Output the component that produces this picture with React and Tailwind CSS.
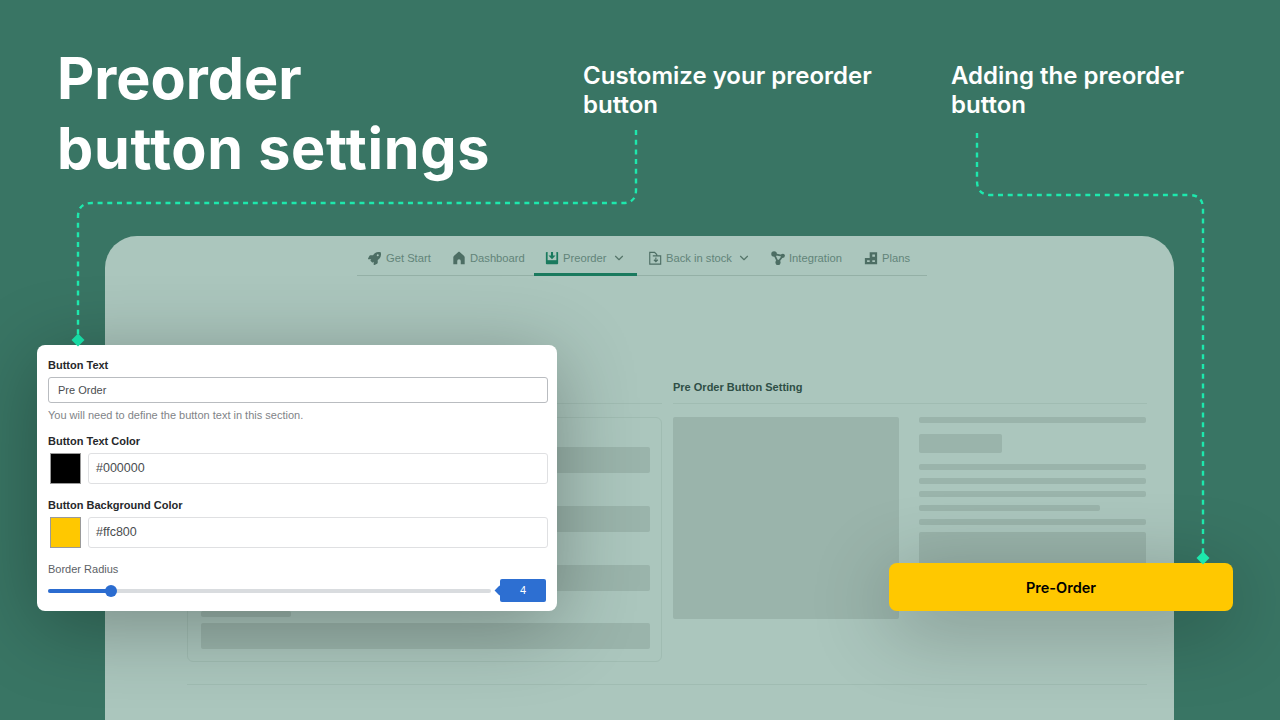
import { FaRocket } from 'react-icons/fa'
import { ChevronDown } from 'lucide-react'

const Icon = ({ children }) => (
  <svg viewBox="0 0 16 16" className="w-[14px] h-[14px]" fill="currentColor">{children}</svg>
)

const TABS = [
  { label: 'Get Start', width: 'w-[84px]', icon: <FaRocket className="w-[13px] h-[13px]" /> },
  {
    label: 'Dashboard',
    width: 'w-[93px]',
    icon: (
      <Icon>
        <path d="M8 .8c.4 0 .8.2 1.100.5l4.500 4.200c.5.400.9 1 .9 1.700V15H10v-3.500a2 2 0 0 0-4 0V15H1.500V7.200c0-.7.400-1.300.9-1.700l4.500-4.200C7.200 1 7.600.8 8 .8z" />
      </Icon>
    ),
  },
  {
    label: 'Preorder',
    width: 'w-[103px]',
    active: true,
    caret: true,
    icon: (
      <Icon>
        <rect x="1" y="1" width="14" height="14" rx="1" fill="#1a7a5e" />
        <rect x="3" y="1" width="10" height="9.500" fill="#abc6bd" />
        <path d="M6.800 1h2.400v4.200H12L8 9.500 4 5.200h2.800z" fill="#1a7a5e" />
      </Icon>
    ),
  },
  {
    label: 'Back in stock',
    width: 'w-[123px]',
    caret: true,
    icon: (
      <Icon>
        <path d="M2 11V1.500h5.500L10 4v1.500M5.500 5.500H14.500V15H2v-4" fill="none" stroke="currentColor" strokeWidth="1.300" />
        <path d="M9 7.500V12M6.800 10 9 12.200 11.200 10" fill="none" stroke="currentColor" strokeWidth="1.300" />
      </Icon>
    ),
  },
  {
    label: 'Integration',
    width: 'w-[93px]',
    icon: (
      <Icon>
        <circle cx="3.500" cy="3.500" r="3.200" />
        <circle cx="13.500" cy="5.500" r="2.400" />
        <circle cx="8" cy="13" r="2.900" />
        <path d="M3.500 3.500 13.500 5.500 8 13z" fill="none" stroke="currentColor" strokeWidth="2" />
      </Icon>
    ),
  },
  {
    label: 'Plans',
    width: 'w-[74px]',
    icon: (
      <Icon>
        <path
          d="M6.500 1.500h8.500V15H1V8h5.500zM9.500 4v2.500h3V4zM3.500 10.500v2h3v-2zm6 0v2h3v-2z"
          fillRule="evenodd"
        />
      </Icon>
    ),
  },
]

const Bar = ({ className }) => <div className={`bg-[#9ab4ab] rounded-[2px] ${className}`} />

function SkeletonPanel() {
  return (
    <div className="w-[1069px] h-[520px] ml-[105px] mt-[236px] bg-[#abc6bd] rounded-[32px] pl-[82px] pr-[27px] overflow-hidden">
      <div className="flex items-end h-[40px] w-[570px] ml-[170px] border-b border-[#94b0a6] text-[#628479]">
        {TABS.map((tab) => (
          <div
            key={tab.label}
            className={`flex items-center ${tab.width} h-[35px] pt-[2px] pl-[11px] shrink-0 border-b-[3px] -mb-px ${tab.active ? 'border-[#1a7a5e]' : 'border-transparent'}`}
          >
            <span className="w-[18px] flex text-[#4d6e64]">{tab.icon}</span>
            <span className="text-[11.200px]">{tab.label}</span>
            {tab.caret && <ChevronDown className="w-[14px] h-[14px] ml-[5px] text-[#557569]" />}
          </div>
        ))}
      </div>

      <div className="flex gap-[11px] mt-[100px]">
        <div className="w-[475px] h-[28px] border-b border-[#a0bcb2]" />
        <div className="w-[474px] h-[28px] pt-[3px] border-b border-[#a0bcb2] text-[11px] font-bold text-[#2f4f46]">
          Pre Order Button Setting
        </div>
      </div>

      <div className="flex gap-[11px] mt-[13px]">
        <div className="w-[475px] h-[245px] border border-[#a0bcb2] rounded-[6px] pt-[29px] pl-[13px] pr-[11px]">
          <Bar className="h-[26px]" />
          <Bar className="h-[26px] mt-[33px]" />
          <Bar className="h-[26px] mt-[33px]" />
          <Bar className="h-[6px] w-[90px] mt-[20px]" />
          <Bar className="h-[26px] mt-[6px]" />
        </div>
        <div className="flex gap-[20px] w-[474px]">
          <Bar className="w-[226px] h-[202px]" />
          <div className="w-[227px]">
            <Bar className="h-[6px]" />
            <Bar className="h-[19px] w-[83px] mt-[11px]" />
            <Bar className="h-[6px] mt-[11px]" />
            <Bar className="h-[6px] mt-[8px]" />
            <Bar className="h-[6px] mt-[7px]" />
            <Bar className="h-[6px] w-[181px] mt-[8px]" />
            <Bar className="h-[6px] mt-[8px]" />
            <Bar className="h-[60px] mt-[7px]" />
          </div>
        </div>
      </div>

      <div className="h-px bg-[#a0bcb2] mt-[22px] w-[960px]" />
    </div>
  )
}

function ColorField({ label, value, swatch, className }) {
  return (
    <div className={className}>
      <div className="text-[11px] leading-[14px] font-bold text-[#26282b]">{label}</div>
      <div className="flex items-center mt-[5px] pl-[2px] gap-[7px]">
        <div className={`w-[31px] h-[31px] border border-[#9a9a9a] ${swatch}`} />
        <div className="flex-1 h-[31px] border-[1.500px] border-[#dfe0e2] rounded-[3px] flex items-center pl-[7px] text-[12.500px] text-[#4a4d50]">
          {value}
        </div>
      </div>
    </div>
  )
}

function SettingsCard() {
  return (
    <div className="absolute left-[37px] top-[345px] w-[520px] h-[266px] bg-white rounded-[8px] pl-[11px] pr-[9px] pt-[13px] shadow-[0_14px_80px_rgba(0,0,0,0.3)] font-['Liberation_Sans',sans-serif]">
      <div className="text-[11px] leading-[14px] font-bold text-[#26282b]">Button Text</div>
      <div className="mt-[5px] h-[26px] border-[1.500px] border-[#b9bcc0] rounded-[3px] flex items-center pl-[9px] text-[11px] text-[#4a4d50]">
        Pre Order
      </div>
      <div className="mt-[5px] text-[11px] leading-[14px] text-[#7f8488]">You will need to define the button text in this section.</div>
      <ColorField label="Button Text Color" value="#000000" swatch="bg-black" className="mt-[12px]" />
      <ColorField label="Button Background Color" value="#ffc800" swatch="bg-[#ffc800]" className="mt-[14px]" />
      <div className="mt-[14px] text-[11px] leading-[14px] text-[#5c6166]">Border Radius</div>
      <div className="flex items-center mt-[3px] h-[23px]">
        <div className="relative w-[443px] h-[4px] rounded-full bg-[#d9dcdf]">
          <div className="w-[63px] h-full rounded-full bg-[#2b6cd0]" />
          <div className="absolute left-[57px] top-[-4px] w-[12px] h-[12px] rounded-full bg-[#2b6cd0]" />
        </div>
        <div className="relative ml-[9px] w-[46px] h-[23px] bg-[#2d6fd2] rounded-[2px] flex items-center justify-center text-[11px] text-white">
          <div className="absolute left-[-4px] top-[8px] w-[7px] h-[7px] rotate-45 bg-[#2d6fd2]" />
          4
        </div>
      </div>
    </div>
  )
}

export default function App() {
  return (
    <div className="relative w-[1280px] h-[720px] overflow-hidden bg-[#397564] font-['Liberation_Sans',sans-serif]">
      <SkeletonPanel />

      {/* headings */}
      <h1 className="absolute left-[57px] top-[43px] font-['Inter',sans-serif] font-bold text-[57.500px] leading-[70px] text-white [font-variant-ligatures:none]">
        Preorder
        <br />
        <span className="tracking-[0.700px]">button settings</span>
      </h1>
      <p className="absolute left-[583px] top-[61px] font-['Inter',sans-serif] font-semibold text-[24px] leading-[29px] text-white">
        Customize your preorder
        <br />
        button
      </p>
      <p className="absolute left-[951px] top-[61px] font-['Inter',sans-serif] font-semibold text-[24px] leading-[29px] text-white">
        Adding the preorder
        <br />
        button
      </p>

      <SettingsCard />

      <div className="absolute left-[889px] top-[563px] w-[344px] h-[48px] pt-px rounded-[8px] bg-[#ffc800] flex items-center justify-center font-['Inter',sans-serif] font-semibold text-[14.500px] text-black shadow-[0_14px_80px_rgba(0,0,0,0.3)]">
        Pre-Order
      </div>

      {/* connector lines */}
      <svg className="absolute inset-0 pointer-events-none" width="1280" height="720" fill="none">
        <path
          d="M636 130V190Q636 203 623 203H92Q78 203 78 217V335"
          stroke="#1de9ad"
          strokeWidth="2.400"
          strokeDasharray="5 4.700"
        />
        <path
          d="M977 133V181Q977 195 991 195H1189Q1203 195 1203 209V553"
          stroke="#1de9ad"
          strokeWidth="2.400"
          strokeDasharray="5 4.700"
        />
        <path d="M78 333.500 84.500 340 78 346.500 71.500 340z" fill="#17d9a3" />
        <path d="M1203 551.500 1209.500 558 1203 564.500 1196.500 558z" fill="#1de9ad" />
      </svg>
    </div>
  )
}
